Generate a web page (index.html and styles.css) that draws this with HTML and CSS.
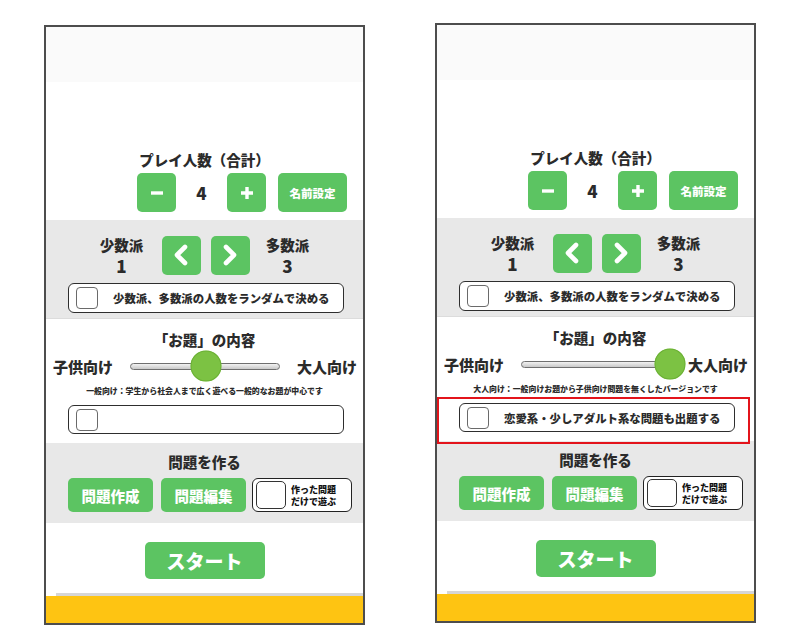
FILE: index.html
```html
<!DOCTYPE html>
<html lang="ja">
<head>
    <meta charset="UTF-8">
    <meta name="viewport" content="width=device-width, initial-scale=1.0">
    <title>お題の設定画面</title>
    <link rel="stylesheet" href="styles.css">
</head>
<body>
    <main class="stage">

        <!-- 一般向け -->
        <div class="phone phone-left">
            <div class="phone-top"></div>

            <section class="players">
                <h2>プレイ人数（合計）</h2>
                <div class="count-row">
                    <button class="btn sq" type="button" aria-label="減らす">
                        <svg width="14" height="14" viewBox="0 0 14 14"><path d="M1 7h12" /></svg>
                    </button>
                    <span class="count">4</span>
                    <button class="btn sq" type="button" aria-label="増やす">
                        <svg width="14" height="14" viewBox="0 0 14 14"><path d="M1 7h12M7 1v12" /></svg>
                    </button>
                    <button class="btn names" type="button">名前設定</button>
                </div>
            </section>

            <section class="split">
                <div class="split-row">
                    <div class="side"><span>少数派</span><span class="num">1</span></div>
                    <button class="btn sq arrow" type="button" aria-label="左">
                        <svg width="16" height="22" viewBox="0 0 16 22"><path d="M12 3L4 11l8 8" /></svg>
                    </button>
                    <button class="btn sq arrow" type="button" aria-label="右">
                        <svg width="16" height="22" viewBox="0 0 16 22"><path d="M4 3l8 8-8 8" /></svg>
                    </button>
                    <div class="side side-right"><span>多数派</span><span class="num">3</span></div>
                </div>
                <label class="check-row"><span class="box"></span><span>少数派、多数派の人数をランダムで決める</span></label>
            </section>

            <section class="theme">
                <h2>「お題」の内容</h2>
                <div class="slider-row">
                    <span>子供向け</span>
                    <div class="track"><span class="thumb thumb-mid"></span></div>
                    <span>大人向け</span>
                </div>
                <p class="note">一般向け：学生から社会人まで広く遊べる一般的なお題が中心です</p>
                <label class="check-row"><span class="box"></span></label>
            </section>

            <section class="make">
                <h2>問題を作る</h2>
                <div class="make-row">
                    <button class="btn wide" type="button">問題作成</button>
                    <button class="btn wide" type="button">問題編集</button>
                    <label class="only">
                        <span class="box big"></span>
                        <span class="only-text"><span>作った問題</span><span>だけで遊ぶ</span></span>
                    </label>
                </div>
            </section>

            <section class="go">
                <button class="btn start" type="button">スタート</button>
            </section>
            <div class="rule"></div>
            <div class="bar"></div>
        </div>

        <!-- 大人向け -->
        <div class="phone phone-right">
            <div class="phone-top"></div>

            <section class="players">
                <h2>プレイ人数（合計）</h2>
                <div class="count-row">
                    <button class="btn sq" type="button" aria-label="減らす">
                        <svg width="14" height="14" viewBox="0 0 14 14"><path d="M1 7h12" /></svg>
                    </button>
                    <span class="count">4</span>
                    <button class="btn sq" type="button" aria-label="増やす">
                        <svg width="14" height="14" viewBox="0 0 14 14"><path d="M1 7h12M7 1v12" /></svg>
                    </button>
                    <button class="btn names" type="button">名前設定</button>
                </div>
            </section>

            <section class="split">
                <div class="split-row">
                    <div class="side"><span>少数派</span><span class="num">1</span></div>
                    <button class="btn sq arrow" type="button" aria-label="左">
                        <svg width="16" height="22" viewBox="0 0 16 22"><path d="M12 3L4 11l8 8" /></svg>
                    </button>
                    <button class="btn sq arrow" type="button" aria-label="右">
                        <svg width="16" height="22" viewBox="0 0 16 22"><path d="M4 3l8 8-8 8" /></svg>
                    </button>
                    <div class="side side-right"><span>多数派</span><span class="num">3</span></div>
                </div>
                <label class="check-row"><span class="box"></span><span>少数派、多数派の人数をランダムで決める</span></label>
            </section>

            <section class="theme">
                <h2>「お題」の内容</h2>
                <div class="slider-row">
                    <span>子供向け</span>
                    <div class="track"><span class="thumb thumb-end"></span></div>
                    <span>大人向け</span>
                </div>
                <p class="note">大人向け：一般向けお題から子供向け問題を無くしたバージョンです</p>
                <label class="check-row"><span class="box"></span><span>恋愛系・少しアダルト系な問題も出題する</span></label>
                <!-- annotation frame -->
                <div class="flag"></div>
            </section>

            <section class="make">
                <h2>問題を作る</h2>
                <div class="make-row">
                    <button class="btn wide" type="button">問題作成</button>
                    <button class="btn wide" type="button">問題編集</button>
                    <label class="only">
                        <span class="box big"></span>
                        <span class="only-text"><span>作った問題</span><span>だけで遊ぶ</span></span>
                    </label>
                </div>
            </section>

            <section class="go">
                <button class="btn start" type="button">スタート</button>
            </section>
            <div class="rule"></div>
            <div class="bar"></div>
        </div>

    </main>
</body>
</html>
```

FILE: styles.css
```css
/* General */
html, body {
    margin: 0;
    padding: 0;
    height: 639px;
    overflow: hidden;
    background: #ffffff;
}

body {
    font-family: "Noto Sans CJK JP", "Noto Sans", sans-serif;
    font-weight: 900;
    color: #2b2b2b;
}

.stage {
    display: flex;
    align-items: flex-start;
    gap: 70px;
    padding-left: 44px;
}

/* Phone frame */
.phone {
    width: 317px;
    border: 2px solid #4d4d4d;
    background: #fff;
    display: flex;
    flex-direction: column;
}

.phone-left {
    margin-top: 25px;
}

.phone-right {
    margin-top: 23px;
}

.phone-top {
    height: 55px;
    background: #fafafa;
}

h2 {
    margin: 0;
    font-size: 14.5px;
    line-height: 20px;
    text-align: center;
    font-weight: 900;
}

/* Buttons */
.btn {
    font-family: inherit;
    font-weight: 900;
    color: #fff;
    background: #5cc462;
    border: none;
    border-radius: 5px;
    padding: 0;
    display: flex;
    align-items: center;
    justify-content: center;
}

.btn svg path {
    fill: none;
    stroke: #fff;
    stroke-width: 3.4;
}

.btn.arrow svg path {
    stroke-width: 4.6;
    stroke-linecap: round;
    stroke-linejoin: round;
}

.sq {
    width: 39px;
    height: 39px;
}

/* Player count */
.players {
    height: 138px;
    padding-top: 68px;
    box-sizing: border-box;
}

.count-row {
    display: flex;
    align-items: center;
    margin-top: 3px;
    padding-left: 91px;
}

.count {
    width: 51px;
    text-align: center;
    font-size: 17px;
}

.names {
    margin-left: 12px;
    width: 69px;
    height: 39px;
    font-size: 11.5px;
}

/* Minority / majority */
.split {
    height: 99px;
    background: #e8e8e8;
    padding-top: 14px;
    box-sizing: border-box;
    border-bottom: 1px solid #dcdcdc;
}

.split-row {
    display: flex;
    align-items: center;
    justify-content: center;
}

.side {
    width: 52px;
    display: flex;
    flex-direction: column;
    align-items: center;
    font-size: 14.5px;
    line-height: 21px;
    margin-right: 14px;
}

.side-right {
    margin-right: 0;
    margin-left: 12px;
}

.side .num {
    font-size: 17px;
}

.arrow + .arrow {
    margin-left: 10px;
}

.check-row {
    display: flex;
    align-items: center;
    width: 276px;
    height: 30px;
    box-sizing: border-box;
    margin: 7px 0 0 22px;
    padding-left: 7px;
    background: #fff;
    border: 1.5px solid #2e2e2e;
    border-radius: 6px;
    font-size: 11.4px;
}

.box {
    width: 22px;
    height: 22px;
    box-sizing: border-box;
    border: 1.5px solid #6a6a6a;
    border-radius: 4px;
    background: #fff;
    margin-right: 15px;
    flex-shrink: 0;
}

/* Theme slider */
.theme {
    position: relative;
    height: 124px;
    padding-top: 11px;
    box-sizing: border-box;
}

.slider-row {
    display: flex;
    align-items: center;
    justify-content: space-between;
    height: 32px;
    padding: 0 6px 0 7px;
    font-size: 15px;
}

.track {
    position: relative;
    width: 150px;
    height: 7px;
    box-sizing: border-box;
    background: linear-gradient(#f2f2f2, #c9c9c9);
    border: 1px solid #6f6f6f;
    border-radius: 4px;
}

.thumb {
    position: absolute;
    top: 50%;
    width: 31px;
    height: 31px;
    border-radius: 50%;
    background: #7cc243;
    box-shadow: inset 0 0 0 1px #6bb035;
    transform: translate(-50%, -50%);
}

.thumb-mid {
    left: 51%;
}

.thumb-end {
    left: 100%;
}

.note {
    margin: 3px 0 0;
    font-size: 7.9px;
    line-height: 12px;
    text-align: center;
}

.theme .check-row {
    margin-top: 8px;
    height: 29px;
}

.flag {
    position: absolute;
    left: 0;
    right: 4px;
    top: 80px;
    height: 47px;
    box-sizing: border-box;
    border: 2px solid #e3141b;
}

/* Make questions */
.make {
    height: 80px;
    background: #e8e8e8;
    padding-top: 9px;
    box-sizing: border-box;
}

.make-row {
    display: flex;
    margin: 6px 0 0 22px;
}

.wide {
    width: 85px;
    height: 34px;
    font-size: 14.5px;
    margin-right: 8px;
}

.wide + .wide {
    margin-right: 6px;
}

.only {
    display: flex;
    align-items: center;
    width: 100px;
    height: 34px;
    box-sizing: border-box;
    padding-left: 3px;
    background: #fff;
    border: 1.5px solid #222;
    border-radius: 6px;
}

.box.big {
    width: 30px;
    height: 28px;
    border-color: #333;
    border-radius: 5px;
    margin-right: 5px;
}

.only-text {
    display: flex;
    flex-direction: column;
    gap: 1px;
    font-size: 9px;
    line-height: 11px;
    color: #111;
}

/* Start */
.go {
    height: 70px;
    padding-top: 19px;
    box-sizing: border-box;
}

.start {
    width: 120px;
    height: 37px;
    margin: 0 auto;
    font-size: 19px;
}

.rule {
    height: 3px;
    margin-left: 10px;
    background: #d6d6d6;
}

.bar {
    height: 27px;
    background: #fec412;
}
```
